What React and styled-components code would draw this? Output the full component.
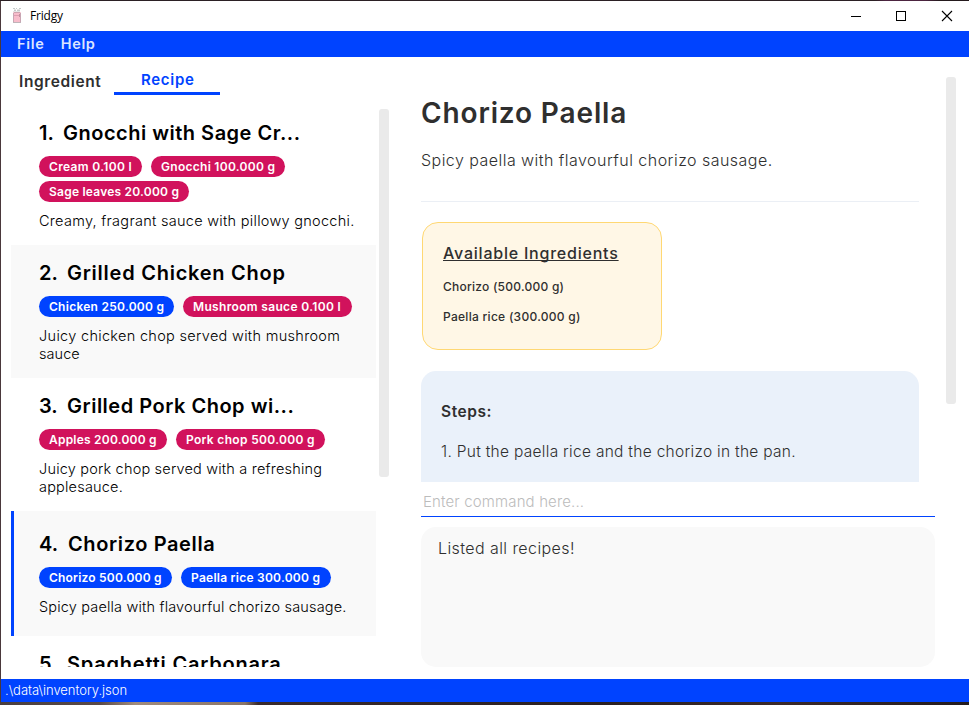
import React from 'react';
import styled, { createGlobalStyle } from 'styled-components';

const BLUE = '#0043ff';
const CRIMSON = '#d1125c';
const INK = '#2f2f2f';

const GlobalStyle = createGlobalStyle`
  * { box-sizing: border-box; }
  body {
    margin: 0;
    overflow: hidden;
    background: #fff;
    font-family: Inter, "Liberation Sans", sans-serif;
    font-feature-settings: "calt" 0;
  }
`;

const Desktop = styled.div`
  display: flex;
  flex-direction: column;
  width: 969px;
  height: 705px;
  padding: 1px 0 3px 1px;
  background:
    linear-gradient(90deg, #2b2024 0 875px, #4c2440 885px 925px, #241a1d 940px) top / 100% 1px no-repeat,
    linear-gradient(90deg, #4a3f3f 0, #5a4a48 100px, #a08b7c 135px, #8a7568 245px, #3a2b2d 258px, #2a2022 600px, #3b2a2a 780px, #241c1e 969px) bottom / 100% 3px no-repeat,
    #4a383b;
`;

const Window = styled.div`
  display: flex;
  flex-direction: column;
  flex: 1;
  min-height: 0;
  background: #fff;
`;

const TitleBar = styled.header`
  display: flex;
  align-items: center;
  height: 30px;
  padding: 0 16px 0 10px;
`;

const AppName = styled.span`
  flex: 1;
  margin-left: 7px;
  font: 12px/16px "Open Sans", sans-serif;
  letter-spacing: -0.2px;
  color: #000;
`;

const Controls = styled.div`
  display: flex;
  gap: 34px;

  svg { display: block; }
`;

const MenuBar = styled.nav`
  display: flex;
  gap: 17px;
  height: 26px;
  padding-left: 16px;
  background: ${BLUE};
`;

const MenuItem = styled.span`
  font-size: 14.5px;
  font-weight: 600;
  line-height: 26px;
  letter-spacing: ${(p) => p.$track}px;
  margin-right: -${(p) => p.$track}px;
  color: #dce5ff;
`;

const Main = styled.main`
  display: flex;
  flex: 1;
  min-height: 0;
`;

const Sidebar = styled.section`
  display: flex;
  flex-direction: column;
  width: 378px;
  margin: 0 0 12px 10px;
`;

const Tabs = styled.div`
  display: flex;
  align-items: flex-start;
  height: 52px;
`;

const Tab = styled.div`
  width: ${(p) => (p.$active ? 106 : 103)}px;
  height: 38px;
  padding-top: ${(p) => (p.$active ? 13 : 15)}px;
  padding-left: ${(p) => (p.$active ? 27 : 8)}px;
  border-bottom: 3px solid ${(p) => (p.$active ? BLUE : 'transparent')};
  color: ${(p) => (p.$active ? BLUE : INK)};
  font-size: ${(p) => (p.$active ? 15 : 15.5)}px;
  font-weight: 600;
  line-height: 20px;
  letter-spacing: ${(p) => (p.$active ? 0.7 : 0.6)}px;
  white-space: nowrap;
`;

const ListArea = styled.div`
  display: flex;
  gap: 3px;
  flex: 1;
  min-height: 0;
`;

const RecipeList = styled.div`
  width: 365px;
  overflow: hidden;
`;

const Card = styled.article`
  padding: ${(p) => (p.$selected ? '21px 0 20px 25px' : p.$first ? '12px 0 15px 28px' : '16px 0 15px 28px')};
  border-left: ${(p) => (p.$selected ? `3px solid ${BLUE}` : '0')};
  background: ${(p) => (p.$shaded ? '#f9f9f9' : '#fff')};
`;

const CardTitle = styled.h2`
  display: flex;
  margin: 0 0 11px;
  font-size: 20px;
  font-weight: 590;
  line-height: 24px;
  color: #000;
  white-space: nowrap;
`;

const CardNumber = styled.span`
  flex: none;
  width: ${(p) => p.$width}px;
`;

const CardName = styled.span`
  letter-spacing: ${(p) => p.$track}px;
`;

const Tags = styled.div`
  display: flex;
  flex-wrap: wrap;
  gap: 4px 9px;
`;

const Tag = styled.span`
  width: ${(p) => p.$width}px;
  height: 21px;
  padding-left: 10px;
  border-radius: 10.5px;
  background: ${(p) => (p.$available ? BLUE : CRIMSON)};
  color: #fff;
  font-size: 12px;
  font-weight: 580;
  line-height: 21px;
  letter-spacing: ${(p) => p.$track}px;
  white-space: nowrap;
`;

const CardText = styled.p`
  margin: 10px 0 0;
  font-size: 14.5px;
  font-weight: 330;
  line-height: 18px;
  color: #000;
`;

const Line = styled.span`
  display: block;
  letter-spacing: ${(p) => p.$track}px;
  white-space: nowrap;
`;

const Thumb = styled.div`
  flex: none;
  width: 10px;
  height: ${(p) => p.$height}px;
  border-radius: 3px;
  background: #eaeaea;
`;

const Workspace = styled.section`
  display: flex;
  flex-direction: column;
  width: 535px;
  margin: 20px 0 12px 32px;
`;

const DetailView = styled.div`
  display: flex;
  justify-content: space-between;
  height: 405px;
`;

const Detail = styled.div`
  display: flex;
  flex-direction: column;
  width: 498px;
  overflow: hidden;
  color: ${INK};
`;

const DetailTitle = styled.h1`
  margin: 19px 0 0;
  font-size: 28px;
  font-weight: 600;
  line-height: 34px;
  letter-spacing: 0.86px;
`;

const DetailText = styled.p`
  margin: 20px 0 0;
  padding-bottom: 31px;
  border-bottom: 1px solid #ebeff5;
  font-size: 16px;
  font-weight: 330;
  line-height: 20px;
  letter-spacing: 0.46px;
  white-space: nowrap;
`;

const IngredientBox = styled.div`
  flex: none;
  width: 240px;
  height: 128px;
  margin: 20px 0 0 1px;
  padding: 20px 0 0 20px;
  border: 1px solid #ffd873;
  border-radius: 16px;
  background: #fff7e6;
`;

const BoxHeading = styled.h3`
  margin: 0 0 14px;
  font-size: 16px;
  font-weight: 500;
  line-height: 20px;
  letter-spacing: 0.78px;
  text-decoration: underline;
  text-decoration-thickness: 1px;
  text-underline-offset: 1px;
  text-decoration-skip-ink: none;
`;

const Ingredient = styled.div`
  height: 30px;
  font-size: 12px;
  font-weight: 500;
  line-height: 20px;
  letter-spacing: ${(p) => p.$track}px;
`;

const StepsBox = styled.div`
  flex: none;
  height: 160px;
  margin-top: 21px;
  padding: 31px 20px;
  border-radius: 15px;
  background: #eaf1fa;
`;

const StepsHeading = styled.h3`
  margin: 0 0 20px;
  font-size: 15.5px;
  font-weight: 600;
  line-height: 20px;
  letter-spacing: 0.55px;
`;

const Step = styled.div`
  font-size: 15.5px;
  font-weight: 330;
  line-height: 20px;
  letter-spacing: 0.29px;
  white-space: nowrap;
`;

const CommandLine = styled.div`
  width: 514px;
  height: 35px;
  padding: 10px 0 0 2px;
  border-bottom: 1px solid ${BLUE};
  color: #bcbcbc;
  font-size: 15px;
  font-weight: 300;
  line-height: 20px;
  letter-spacing: 0.14px;
`;

const Output = styled.div`
  width: 514px;
  height: 140px;
  margin-top: 10px;
  padding: 11px 17px;
  border-radius: 15px;
  background: #f9f9f9;
  color: ${INK};
  font-size: 16px;
  font-weight: 330;
  line-height: 20px;
  letter-spacing: 0.42px;
`;

const StatusBar = styled.footer`
  height: 23px;
  padding-left: 4px;
  background: ${BLUE};
  color: #fff;
  font-size: 13px;
  font-weight: 300;
  line-height: 22px;
  letter-spacing: -0.02px;
`;

const recipes = [
  {
    number: '1.', numberWidth: 24, name: 'Gnocchi with Sage Cr...', track: 0.5,
    tags: [['Cream 0.100 l', 103, 0.33], ['Gnocchi 100.000 g', 134, 0.28], ['Sage leaves 20.000 g', 150, 0.225]],
    lines: [['Creamy, fragrant sauce with pillowy gnocchi.', 0.285]],
  },
  {
    number: '2.', numberWidth: 28, name: 'Grilled Chicken Chop', track: 0.75, shaded: true,
    tags: [['Chicken 250.000 g', 135, 0.268, true], ['Mushroom sauce 0.100 l', 169, 0.333]],
    lines: [['Juicy chicken chop served with mushroom', 0.31], ['sauce', 0.05]],
  },
  {
    number: '3.', numberWidth: 28, name: 'Grilled Pork Chop wi...', track: 0.51,
    tags: [['Apples 200.000 g', 128, 0.214], ['Pork chop 500.000 g', 149, 0.321]],
    lines: [['Juicy pork chop served with a refreshing', 0.19], ['applesauce.', 0.2]],
  },
  {
    number: '4.', numberWidth: 29, name: 'Chorizo Paella', track: 0.62, shaded: true, selected: true,
    tags: [['Chorizo 500.000 g', 133, 0.204, true], ['Paella rice 300.000 g', 150, 0.258, true]],
    lines: [['Spicy paella with flavourful chorizo sausage.', 0.17]],
  },
  { number: '5.', numberWidth: 28, name: 'Spaghetti Carbonara', track: 0.79, tags: [], lines: [] },
];

function FridgeIcon() {
  return (
    <svg width="12" height="16" viewBox="0 0 12 16" fill="none">
      <path d="M2 .5h2M5 .5h1M8 .5h2M3 2.5h2M6 2.5h3" stroke="#c4caca" />
      <path d="M3 1.5h2M6 1.5h3M2 3.5h7" stroke="#e4e4e4" />
      <rect x="2" y="4" width="8" height="10.5" rx="1" fill="#f7bccb" />
      <path d="M2.5 5v9M9.5 5v9" stroke="#c9a6b3" />
      <path d="M3 4.5h6" stroke="#cfa3b0" />
      <path d="M3 7.5h5" stroke="#dd9fb1" />
      <path d="M8.5 6v3" stroke="#c48f9f" />
      <path d="M2 14.5h8" stroke="#bfb4b9" />
    </svg>
  );
}

function WindowControls() {
  return (
    <Controls>
      <svg width="12" height="12" viewBox="0 0 12 12"><path d="M2 6.5h10" stroke="#000" /></svg>
      <svg width="12" height="12" viewBox="0 0 12 12"><rect x="1.5" y="1.5" width="9" height="9" fill="none" stroke="#000" /></svg>
      <svg width="12" height="12" viewBox="0 0 12 12"><path d="M1 1l10 10M11 1L1 11" stroke="#000" strokeWidth="1.1" /></svg>
    </Controls>
  );
}

function RecipeCard({ recipe, first }) {
  return (
    <Card $first={first} $selected={recipe.selected} $shaded={recipe.shaded}>
      <CardTitle>
        <CardNumber $width={recipe.numberWidth}>{recipe.number}</CardNumber>
        <CardName $track={recipe.track}>{recipe.name}</CardName>
      </CardTitle>
      <Tags>
        {recipe.tags.map(([label, width, track, available]) => (
          <Tag key={label} $width={width} $track={track} $available={available}>{label}</Tag>
        ))}
      </Tags>
      <CardText>
        {recipe.lines.map(([text, track]) => <Line key={text} $track={track}>{text}</Line>)}
      </CardText>
    </Card>
  );
}

export default function App() {
  return (
    <Desktop>
      <GlobalStyle />
      <Window>
        <TitleBar>
          <FridgeIcon />
          <AppName>Fridgy</AppName>
          <WindowControls />
        </TitleBar>
        <MenuBar>
          <MenuItem $track={0.7}>File</MenuItem>
          <MenuItem $track={0.6}>Help</MenuItem>
        </MenuBar>
        <Main>
          <Sidebar>
            <Tabs>
              <Tab>Ingredient</Tab>
              <Tab $active>Recipe</Tab>
            </Tabs>
            <ListArea>
              <RecipeList>
                {recipes.map((recipe, i) => <RecipeCard key={recipe.number} recipe={recipe} first={i === 0} />)}
              </RecipeList>
              <Thumb $height={368} />
            </ListArea>
          </Sidebar>
          <Workspace>
            <DetailView>
              <Detail>
                <DetailTitle>Chorizo Paella</DetailTitle>
                <DetailText>Spicy paella with flavourful chorizo sausage.</DetailText>
                <IngredientBox>
                  <BoxHeading>Available Ingredients</BoxHeading>
                  <Ingredient $track={0.24}>Chorizo (500.000 g)</Ingredient>
                  <Ingredient $track={0.28}>Paella rice (300.000 g)</Ingredient>
                </IngredientBox>
                <StepsBox>
                  <StepsHeading>Steps:</StepsHeading>
                  <Step>1. Put the paella rice and the chorizo in the pan.</Step>
                </StepsBox>
              </Detail>
              <Thumb $height={327} />
            </DetailView>
            <CommandLine>Enter command here...</CommandLine>
            <Output>Listed all recipes!</Output>
          </Workspace>
        </Main>
        <StatusBar>.\data\inventory.json</StatusBar>
      </Window>
    </Desktop>
  );
}
